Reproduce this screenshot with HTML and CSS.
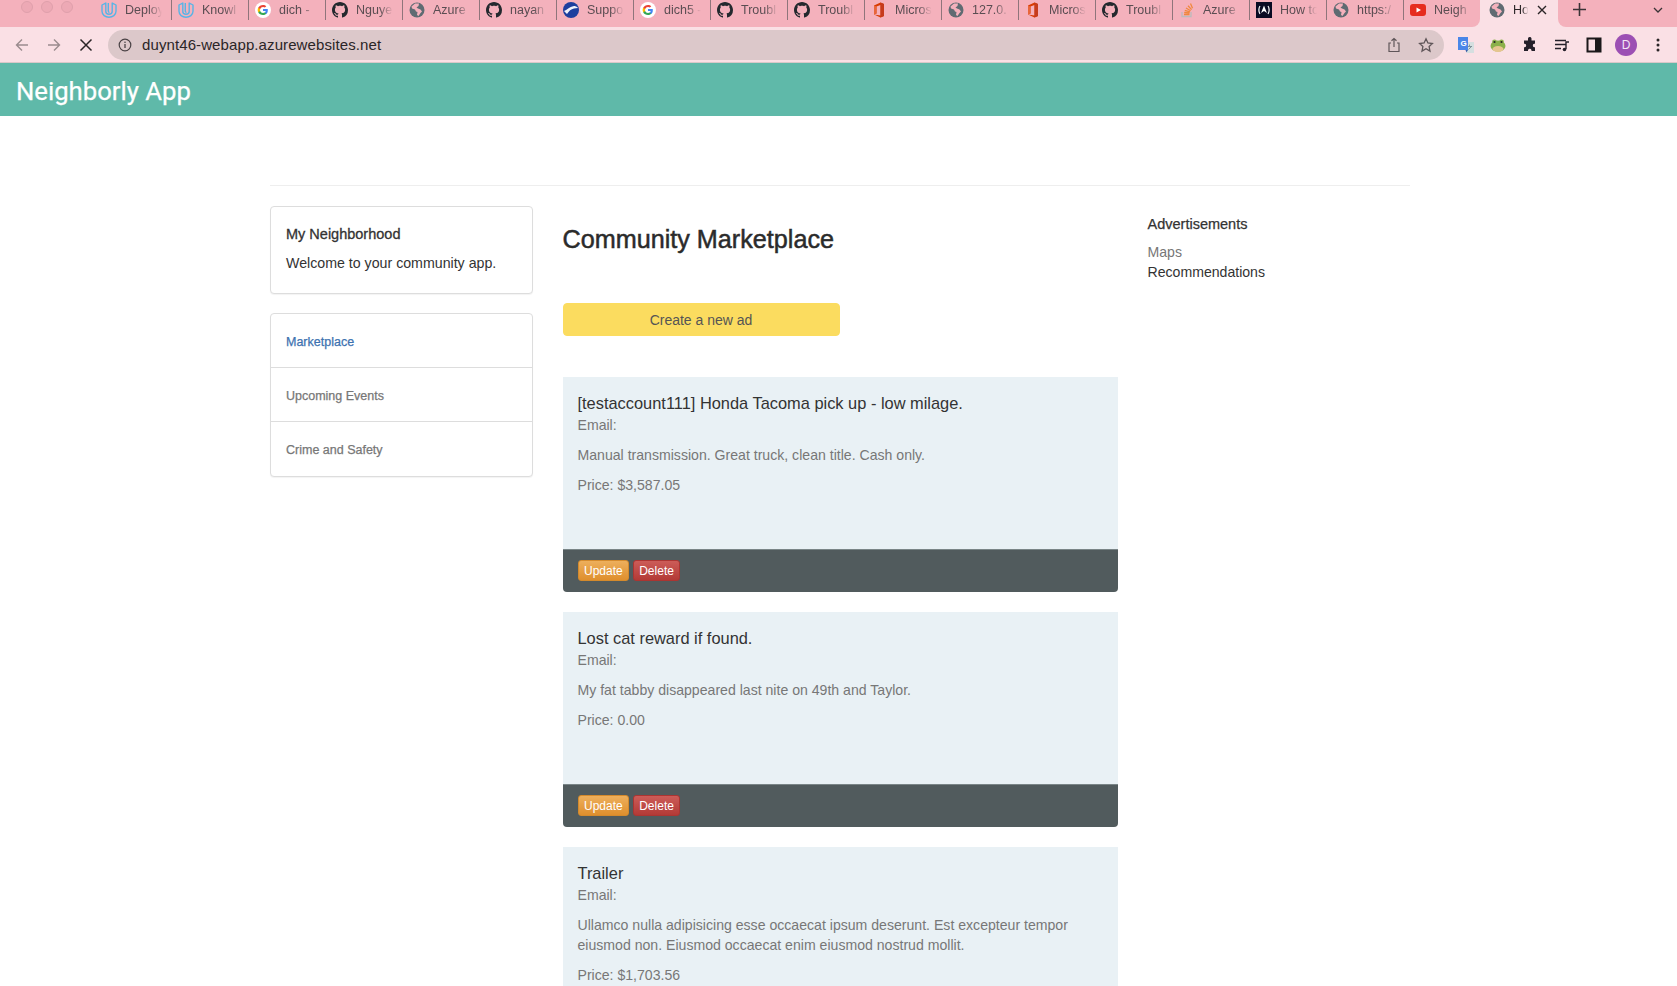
FILE: index.html
```html
<!DOCTYPE html>
<html lang="en">
<head>
    <meta charset="UTF-8">
    <meta name="viewport" content="width=device-width, initial-scale=1.0">
    <title>Neighborly App</title>
    <link rel="stylesheet" href="styles.css">
</head>
<body>

<svg class="icon-defs" aria-hidden="true">
    <symbol id="i-udacity" viewBox="0 0 16 16">
        <path d="M4.800 1 1 3v6.300C1 13 4.300 15.200 8 15.200s7-2.200 7-5.900V3l-3.800-2v8.500c0 1.700-1.400 2.700-3.200 2.700s-3.200-1-3.200-2.700z" fill="none" stroke="#58b4e6" stroke-width="1.400" stroke-linejoin="round"/>
        <path d="M7.300 1v8.300c0 .8.400 1.100 1.200 1.100" fill="none" stroke="#58b4e6" stroke-width="1.400"/>
    </symbol>
    <symbol id="i-google" viewBox="0 0 16 16">
        <circle cx="8" cy="8" r="8" fill="#fff"/>
        <path d="M12.800 8.200c0-.4 0-.8-.1-1.100H8v2h2.700c-.1.700-.5 1.200-1 1.600v1.300h1.600c1-.9 1.500-2.200 1.500-3.800z" fill="#4285f4"/>
        <path d="M8 13c1.300 0 2.500-.4 3.300-1.200l-1.600-1.300c-.4.300-1 .5-1.700.5-1.300 0-2.400-.9-2.800-2H3.200v1.300C4 12 5.900 13 8 13z" fill="#34a853"/>
        <path d="M5.200 9c-.2-.6-.2-1.300 0-1.900V5.800H3.200c-.7 1.400-.7 3 0 4.400z" fill="#fbbc05"/>
        <path d="M8 4.900c.7 0 1.400.3 1.900.7l1.400-1.400C10.500 3.400 9.300 3 8 3 5.900 3 4 4.100 3.200 5.800l2 1.300c.4-1.300 1.500-2.200 2.800-2.200z" fill="#ea4335"/>
    </symbol>
    <symbol id="i-github" viewBox="0 0 16 16">
        <path fill="#24292e" d="M8 0C3.580 0 0 3.580 0 8c0 3.540 2.290 6.530 5.470 7.590.4.070.55-.17.55-.38 0-.19-.01-.82-.01-1.490-2.010.37-2.530-.49-2.690-.94-.09-.23-.48-.94-.82-1.130-.28-.15-.68-.52-.01-.53.63-.01 1.080.58 1.230.82.720 1.210 1.870.87 2.330.66.070-.52.280-.87.510-1.070-1.780-.2-3.640-.89-3.640-3.950 0-.87.310-1.590.820-2.150-.08-.2-.36-1.020.08-2.120 0 0 .67-.21 2.200.82.640-.18 1.320-.27 2-.27s1.360.09 2 .27c1.530-1.040 2.200-.82 2.200-.82.440 1.100.160 1.920.08 2.120.51.560.82 1.270.82 2.150 0 3.070-1.870 3.750-3.650 3.950.29.250.54.730.54 1.480 0 1.070-.01 1.930-.01 2.200 0 .21.150.46.550.38A8.010 8.010 0 0 0 16 8c0-4.420-3.580-8-8-8z"/>
    </symbol>
    <symbol id="i-globe" viewBox="0 0 16 16">
        <circle cx="8" cy="8" r="7.500" fill="#5f6b72"/>
        <path d="M6 1.500 2.500 4.500 3 6.500l3 1 1 2 1.500.5-.5 3 1.500 1 2-3 1.500-1.500-1.500-2L9 6.500 7.500 5.500 9.500 4 10 1.500z" fill="#f4b1bc"/>
    </symbol>
    <symbol id="i-support" viewBox="0 0 16 16">
        <circle cx="8" cy="8" r="8" fill="#1d3f9e"/>
        <path d="M1 9c3-1 5-4 10-5 1 0 3 .5 4 2l-4 .5C8 7 6 9 4 12z" fill="#eef3fb"/>
    </symbol>
    <symbol id="i-office" viewBox="0 0 16 16">
        <path d="M3 3.500 9.500.5 13 2v12l-3.500 1.500L3 12.500l6.500 1V3L5.500 4.500v7L3 12.500z" fill="#d83b01"/>
        <path d="M9.500.5 13 2v12l-3.500 1.500z" fill="#c63b1d"/>
        <path d="M3 3.500 5.500 4.500v7L3 12.500z" fill="#e8663a"/>
    </symbol>
    <symbol id="i-stack" viewBox="0 0 16 16">
        <path d="M3 10v4.500h9V10" fill="none" stroke="#bcbbbb" stroke-width="1.300"/>
        <path d="M5 12.500h5.500M5.200 10.500l5.300.5M5.800 8.300l5.200 1.500M7 6l4.600 2.700M9 3.800l3.600 3.800M11.500 1.500l2 4.800" fill="none" stroke="#f0883e" stroke-width="1.300"/>
    </symbol>
    <symbol id="i-fcc" viewBox="0 0 16 16">
        <rect width="16" height="16" fill="#0a0a23"/>
        <path d="M4 4C2.500 6 2.500 10 4 12M12 4c1.500 2 1.500 6 0 8" fill="none" stroke="#fff" stroke-width="1.200"/>
        <path d="M8 3.500l3 7.500-3-2-3 2z" fill="#fff"/>
    </symbol>
    <symbol id="i-youtube" viewBox="0 0 16 16">
        <rect y="2" width="16" height="12" rx="3" fill="#e62b1e"/>
        <path d="M6.500 5.500v5L11 8z" fill="#fff"/>
    </symbol>
</svg>

<div class="tabstrip">
    <div class="tabs-left">
        <div class="traffic-lights"><span></span><span></span><span></span></div>
        <div class="tab"><svg class="favicon"><use href="#i-udacity"/></svg><span class="tab-title">Deploy</span></div>
        <div class="tab"><svg class="favicon"><use href="#i-udacity"/></svg><span class="tab-title">Knowl</span></div>
        <div class="tab"><svg class="favicon"><use href="#i-google"/></svg><span class="tab-title">dich -</span></div>
        <div class="tab"><svg class="favicon"><use href="#i-github"/></svg><span class="tab-title">Nguye</span></div>
        <div class="tab"><svg class="favicon"><use href="#i-globe"/></svg><span class="tab-title">Azure</span></div>
        <div class="tab"><svg class="favicon"><use href="#i-github"/></svg><span class="tab-title">nayan</span></div>
        <div class="tab"><svg class="favicon"><use href="#i-support"/></svg><span class="tab-title">Suppo</span></div>
        <div class="tab"><svg class="favicon"><use href="#i-google"/></svg><span class="tab-title">dich5 -</span></div>
        <div class="tab"><svg class="favicon"><use href="#i-github"/></svg><span class="tab-title">Troubl</span></div>
        <div class="tab"><svg class="favicon"><use href="#i-github"/></svg><span class="tab-title">Troubl</span></div>
        <div class="tab"><svg class="favicon"><use href="#i-office"/></svg><span class="tab-title">Micros</span></div>
        <div class="tab"><svg class="favicon"><use href="#i-globe"/></svg><span class="tab-title">127.0.</span></div>
        <div class="tab"><svg class="favicon"><use href="#i-office"/></svg><span class="tab-title">Micros</span></div>
        <div class="tab"><svg class="favicon"><use href="#i-github"/></svg><span class="tab-title">Troubl</span></div>
        <div class="tab"><svg class="favicon"><use href="#i-stack"/></svg><span class="tab-title">Azure</span></div>
        <div class="tab"><svg class="favicon"><use href="#i-fcc"/></svg><span class="tab-title">How to</span></div>
        <div class="tab"><svg class="favicon"><use href="#i-globe"/></svg><span class="tab-title">https:/</span></div>
        <div class="tab tab-last"><svg class="favicon"><use href="#i-youtube"/></svg><span class="tab-title">Neigh</span></div>
    </div>
    <div class="tab-active">
        <svg class="favicon"><use href="#i-globe"/></svg>
        <span class="tab-title">Ho</span>
        <svg class="tab-close" viewBox="0 0 10 10"><path d="M1 1l8 8M9 1l-8 8" stroke="#2b2527" stroke-width="1.400"/></svg>
    </div>
    <div class="tabs-right">
        <svg class="new-tab" viewBox="0 0 14 14"><path d="M7 0v14M0 7h14" stroke="#3a3336" stroke-width="1.700"/></svg>
        <svg class="tab-search" viewBox="0 0 12 8"><path d="M2 2l4 4 4-4" fill="none" stroke="#3a3336" stroke-width="1.300"/></svg>
    </div>
</div>

<div class="toolbar">
    <svg class="nav-icon" viewBox="0 0 16 16"><path d="M14 8H2.500M8 2.500 2.500 8 8 13.500" fill="none" stroke="#9a8b8e" stroke-width="1.400"/></svg>
    <svg class="nav-icon" viewBox="0 0 16 16"><path d="M2 8h11.500M8 2.500 13.500 8 8 13.500" fill="none" stroke="#9a8b8e" stroke-width="1.400"/></svg>
    <svg class="nav-icon" viewBox="0 0 16 16"><path d="M2.500 2.500l11 11M13.500 2.500l-11 11" fill="none" stroke="#2b2527" stroke-width="1.500"/></svg>
    <div class="omnibox">
        <svg class="info-icon" viewBox="0 0 14 14"><circle cx="7" cy="7" r="5.800" fill="none" stroke="#4a4245" stroke-width="1.200"/><path d="M7 6v4" stroke="#4a4245" stroke-width="1.300"/><circle cx="7" cy="4.200" r=".8" fill="#4a4245"/></svg>
        <span class="url">duynt46-webapp.azurewebsites.net</span>
        <svg class="omni-icon" viewBox="0 0 16 16"><path d="M5 6H3v8.500h10V6h-2M8 10V1.500M5.500 3.800 8 1.500l2.500 2.300" fill="none" stroke="#5f5659" stroke-width="1.200"/></svg>
        <svg class="omni-icon" viewBox="0 0 16 16"><path d="M8 1.800l1.900 4.200 4.500.5-3.300 3.100.9 4.500L8 11.800l-4 2.300.9-4.500L1.600 6.500l4.500-.5z" fill="none" stroke="#5f5659" stroke-width="1.300"/></svg>
    </div>
    <div class="extensions">
        <svg class="ext-icon" viewBox="0 0 16 16"><path d="M7 5h9v11H9z" fill="#d5dfe0"/><rect x="0" y="0" width="10" height="13" fill="#4a86e8"/><path d="M10 13l-1.500 2.500L7.500 13z" fill="#3b5fa8"/><path d="M11.500 7.500v1.500M10 9.500h4M10.500 12.500l3-3" stroke="#6c8089" stroke-width=".8"/><text x="2.500" y="9" class="ext-g">G</text></svg>
        <svg class="ext-icon" viewBox="0 0 16 16"><ellipse cx="8" cy="9" rx="7.500" ry="5.500" fill="#8bb04a"/><ellipse cx="8" cy="12" rx="5.500" ry="3" fill="#e6c58f"/><circle cx="4.500" cy="5" r="2.400" fill="#8bb04a"/><circle cx="11.500" cy="5" r="2.400" fill="#8bb04a"/><circle cx="4.500" cy="5" r="1.100" fill="#222"/><circle cx="11.500" cy="5" r="1.100" fill="#222"/></svg>
        <svg class="ext-icon" viewBox="0 0 16 16"><path d="M6 1.500a1.800 1.800 0 0 1 3.500 0V3.500H13v3.300h-.8a1.800 1.800 0 0 0 0 3.500h.8V14H9.500v-.8a1.800 1.800 0 0 0-3.500 0V14H2v-3.700h.8a1.800 1.800 0 0 0 0-3.500H2V3.500h4z" fill="#24202a"/></svg>
        <svg class="ext-icon" viewBox="0 0 16 16"><path d="M1 3.500h11M1 7.500h11M1 11.500h6" stroke="#24202a" stroke-width="1.400"/><path d="M12 12V5h3" fill="none" stroke="#24202a" stroke-width="1.400"/><circle cx="10.500" cy="12.500" r="1.800" fill="#24202a"/></svg>
        <svg class="ext-icon" viewBox="0 0 16 16"><rect x="1.500" y="1.500" width="13" height="13" fill="none" stroke="#1b181a" stroke-width="2"/><rect x="9" y="1.500" width="5.500" height="13" fill="#1b181a"/></svg>
        <span class="avatar">D</span>
        <svg class="ext-icon" viewBox="0 0 16 16"><circle cx="8" cy="3" r="1.500" fill="#2b2527"/><circle cx="8" cy="8" r="1.500" fill="#2b2527"/><circle cx="8" cy="13" r="1.500" fill="#2b2527"/></svg>
    </div>
</div>

<header class="site-header">
    <span class="brand">Neighborly App</span>
</header>

<div class="container">
    <hr class="divider">
    <div class="columns">
        <aside class="sidebar">
            <div class="card intro">
                <h4>My Neighborhood</h4>
                <p>Welcome to your community app.</p>
            </div>
            <div class="card side-nav">
                <a class="active">Marketplace</a>
                <a>Upcoming Events</a>
                <a>Crime and Safety</a>
            </div>
        </aside>

        <main class="main">
            <h1>Community Marketplace</h1>
            <button class="new-ad">Create a new ad</button>

            <div class="ad">
                <div class="ad-body">
                    <h3>[testaccount111] Honda Tacoma pick up - low milage.</h3>
                    <p>Email:</p>
                    <p>Manual transmission. Great truck, clean title. Cash only.</p>
                    <p>Price: $3,587.05</p>
                </div>
                <div class="ad-footer"><button class="btn btn-update">Update</button><button class="btn btn-delete">Delete</button></div>
            </div>

            <div class="ad">
                <div class="ad-body">
                    <h3>Lost cat reward if found.</h3>
                    <p>Email:</p>
                    <p>My fat tabby disappeared last nite on 49th and Taylor.</p>
                    <p>Price: 0.00</p>
                </div>
                <div class="ad-footer"><button class="btn btn-update">Update</button><button class="btn btn-delete">Delete</button></div>
            </div>

            <div class="ad">
                <div class="ad-body">
                    <h3>Trailer</h3>
                    <p>Email:</p>
                    <p>Ullamco nulla adipisicing esse occaecat ipsum deserunt. Est excepteur tempor eiusmod non. Eiusmod occaecat enim eiusmod nostrud mollit.</p>
                    <p>Price: $1,703.56</p>
                </div>
            </div>
        </main>

        <aside class="ads">
            <h4>Advertisements</h4>
            <a class="ads-muted">Maps</a>
            <a>Recommendations</a>
        </aside>
    </div>
</div>

</body>
</html>
```

FILE: styles.css
```css
html, body {
    height: 100%;
    overflow: hidden;
}
body {
    margin: 0;
    font-family: "Liberation Sans", Arial, sans-serif;
    background-color: white;
    color: #777;
}
.icon-defs {
    display: none;
}

/* browser chrome */
.tabstrip {
    display: flex;
    height: 27px;
    background-color: #fae0e5;
    overflow: hidden;
}
.tabs-left {
    display: flex;
    align-items: flex-start;
    flex: none;
    background-color: #f4b1bc;
    border-bottom-right-radius: 8px;
}
.tabs-right {
    display: flex;
    align-items: flex-start;
    flex: 1;
    background-color: #f4b1bc;
    border-bottom-left-radius: 8px;
}
.traffic-lights {
    display: flex;
    gap: 8px;
    width: 95px;
    padding-left: 21px;
    box-sizing: border-box;
    margin-top: 1px;
}
.traffic-lights span {
    width: 12px;
    height: 12px;
    border-radius: 50%;
    background-color: #eda9b5;
    border: 1px solid #dfa0ab;
    box-sizing: border-box;
}
.tab {
    display: flex;
    align-items: center;
    gap: 8px;
    width: 77px;
    height: 20px;
    padding-left: 6px;
    box-sizing: border-box;
    border-right: 1px solid #8f757b;
    flex: none;
}
.tab-last {
    width: 76px;
    border-right: none;
}
.favicon {
    width: 16px;
    height: 16px;
    flex: none;
}
.tab-title {
    font-size: 12.5px;
    color: #5a4d52;
    white-space: nowrap;
    overflow: hidden;
    flex: 1;
    margin-right: 7px;
    -webkit-mask-image: linear-gradient(to right, #000 60%, transparent 95%);
    mask-image: linear-gradient(to right, #000 60%, transparent 95%);
}
.tab-active {
    display: flex;
    align-items: center;
    gap: 8px;
    width: 78px;
    height: 20px;
    padding: 0 11px 0 9px;
    box-sizing: border-box;
    flex: none;
}
.tab-active .tab-title {
    color: #2b2527;
    margin-right: 0;
}
.tab-close {
    width: 10px;
    height: 10px;
    flex: none;
}
.new-tab {
    width: 13px;
    height: 13px;
    margin: 3px 0 0 15px;
}
.tab-search {
    width: 12px;
    height: 8px;
    margin: 6px 13px 0 auto;
}
.toolbar {
    display: flex;
    align-items: center;
    height: 35px;
    background-color: #fae0e5;
    padding-left: 14px;
    border-bottom: 1px solid #d9c8c9;
}
.nav-icon {
    width: 16px;
    height: 16px;
    margin-right: 16px;
    flex: none;
}
.omnibox {
    display: flex;
    align-items: center;
    width: 1336px;
    height: 30px;
    margin-left: -2px;
    padding: 0 10px 0 10px;
    box-sizing: border-box;
    background-color: #dcc8ca;
    border-radius: 15px;
    flex: none;
}
.info-icon {
    width: 14px;
    height: 14px;
    margin-right: 10px;
}
.url {
    font-size: 15px;
    letter-spacing: 0.1px;
    color: #2b2527;
    flex: 1;
}
.omni-icon {
    width: 16px;
    height: 16px;
    margin-left: 16px;
}
.extensions {
    display: flex;
    align-items: center;
    gap: 16px;
    margin-left: 14px;
}
.ext-icon {
    width: 16px;
    height: 16px;
    flex: none;
}
.ext-g {
    font-size: 8px;
    font-weight: 700;
    fill: white;
}
.avatar {
    width: 22px;
    height: 22px;
    margin: 0 -3px;
    border-radius: 50%;
    background-color: #9c4fb3;
    color: #f3e6f6;
    font-size: 12px;
    line-height: 22px;
    text-align: center;
}

/* page */
.site-header {
    display: flex;
    align-items: center;
    height: 53px;
    padding: 2px 0 0 16px;
    box-sizing: border-box;
    background-color: #5fb9a9;
}
.brand {
    font-family: Roboto, sans-serif;
    font-size: 25.7px;
    color: white;
    -webkit-text-stroke: 0.25px white;
}
.container {
    width: 1140px;
    margin-left: 270px;
}
.divider {
    margin: 69px 0 20px;
    border: 0;
    border-top: 1px solid #eee;
}
.columns {
    display: grid;
    grid-template-columns: 262.5px 555px 1fr;
    column-gap: 30px;
}
.card {
    background: white;
    border: 1px solid #ddd;
    border-radius: 4px;
    box-shadow: 0 1px 1px rgba(0, 0, 0, 0.05);
    margin-bottom: 19px;
    box-sizing: border-box;
}
.intro {
    height: 88px;
    padding: 18px 15px 0;
    color: #333;
}
.intro h4 {
    margin: 0 0 9px;
    font-size: 14.5px;
    line-height: 19px;
    font-weight: 500;
    -webkit-text-stroke: 0.3px #333;
}
.intro p {
    margin: 0;
    font-size: 14.2px;
    line-height: 20px;
}
.side-nav a {
    display: block;
    height: 54px;
    padding: 0 15px;
    line-height: 56px;
    font-size: 12.5px;
    box-sizing: border-box;
    border-bottom: 1px solid #ddd;
    color: #777;
    -webkit-text-stroke: 0.25px #777;
}
.side-nav a.active {
    color: #3d72b0;
    -webkit-text-stroke: 0.25px #3d72b0;
}
.side-nav a:last-child {
    border-bottom: none;
}
.main h1 {
    margin: 0;
    height: 97px;
    padding-top: 18px;
    box-sizing: border-box;
    font-size: 25.2px;
    line-height: 30px;
    font-weight: 500;
    color: #2b2b2b;
    -webkit-text-stroke: 0.5px #2b2b2b;
}
.new-ad {
    display: block;
    width: 277px;
    height: 33px;
    margin-bottom: 41px;
    padding: 0;
    background-color: #fbdc5f;
    border: 1px solid #fbdc5f;
    border-radius: 4px;
    color: #555;
    font-family: inherit;
    font-size: 14px;
}
.ad {
    margin-bottom: 20px;
    border-radius: 0 0 4px 4px;
    overflow: hidden;
}
.ad-body {
    height: 172px;
    padding: 15px;
    box-sizing: border-box;
    background-color: #e9f1f5;
    font-size: 14.1px;
    line-height: 20px;
}
.ad-body h3 {
    margin: 0;
    font-size: 16.4px;
    line-height: 23px;
    font-weight: 400;
    color: #333;
}
.ad-body p {
    margin: 0 0 10px;
}
.ad:last-child .ad-body {
    height: auto;
}
.ad-footer {
    display: flex;
    gap: 4px;
    height: 43px;
    padding: 10px 15px;
    box-sizing: border-box;
    background-color: #515b5d;
    border-top: 1px solid #7a8587;
}
.btn {
    height: 21px;
    padding: 0 5.5px;
    border-radius: 3px;
    color: white;
    font-family: inherit;
    font-size: 12px;
}
.btn-update {
    background: linear-gradient(#edaf5c, #df8f2d);
    border: 1px solid #d48a2c;
}
.btn-delete {
    padding: 0 5px;
    background: linear-gradient(#cc5c58, #b33a36);
    border: 1px solid #ab3532;
}
.ads h4 {
    margin: 9px 0 9px;
    font-size: 14.5px;
    line-height: 18px;
    font-weight: 500;
    color: #333;
    -webkit-text-stroke: 0.25px #333;
}
.ads a {
    display: block;
    font-size: 14.1px;
    line-height: 20px;
    color: #333;
}
.ads a.ads-muted {
    color: #777;
}
```
